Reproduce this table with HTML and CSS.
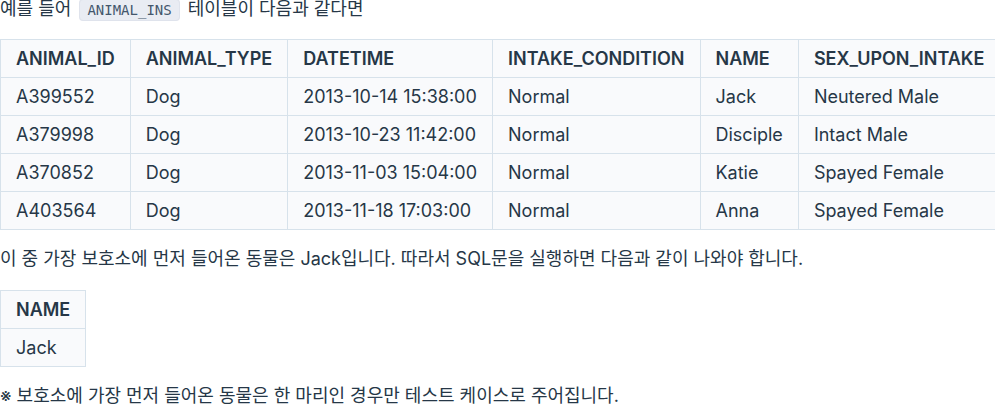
FILE: index.html
```html
<!DOCTYPE html>
<html lang="ko">
<head>
<meta charset="utf-8">
<link rel="stylesheet" href="styles.css">
</head>
<body>
<div class="doc">
  <p class="p1">예를 들어 <code class="chip">ANIMAL_INS</code> 테이블이 다음과 같다면</p>
  <table class="grid">
    <thead>
      <tr><th>ANIMAL_ID</th><th>ANIMAL_TYPE</th><th>DATETIME</th><th>INTAKE_CONDITION</th><th>NAME</th><th>SEX_UPON_INTAKE</th></tr>
    </thead>
    <tbody>
      <tr><td>A399552</td><td>Dog</td><td>2013-10-14 15:38:00</td><td>Normal</td><td>Jack</td><td>Neutered Male</td></tr>
      <tr><td>A379998</td><td>Dog</td><td>2013-10-23 11:42:00</td><td>Normal</td><td>Disciple</td><td>Intact Male</td></tr>
      <tr><td>A370852</td><td>Dog</td><td>2013-11-03 15:04:00</td><td>Normal</td><td>Katie</td><td>Spayed Female</td></tr>
      <tr><td>A403564</td><td>Dog</td><td>2013-11-18 17:03:00</td><td>Normal</td><td>Anna</td><td>Spayed Female</td></tr>
    </tbody>
  </table>
  <p class="p2">이 중 가장 보호소에 먼저 들어온 동물은 Jack입니다. 따라서 SQL문을 실행하면 다음과 같이 나와야 합니다.</p>
  <table class="grid">
    <thead><tr><th>NAME</th></tr></thead>
    <tbody><tr><td>Jack</td></tr></tbody>
  </table>
  <p class="p3">※ 보호소에 가장 먼저 들어온 동물은 한 마리인 경우만 테스트 케이스로 주어집니다.</p>
</div>
</body>
</html>
```
FILE: styles.css
```css
html, body {
  margin: 0;
  padding: 0;
  background: #ffffff;
}
.doc {
  font-family: Inter, "Noto Sans CJK KR", sans-serif;
  font-size: 18px;
  line-height: 27px;
  color: #263747;
}
.p1 {
  margin: 0 0 20px 0;
  line-height: 17px;
}
.p2 {
  margin: 15px 0 18px 0;
}
.p3 {
  margin: 15px 0 0 0;
}
.chip {
  font-family: "DejaVu Sans Mono", monospace;
  font-size: 14px;
  line-height: 18px;
  color: #44576c;
  background: #e9ecf3;
  border: 1px solid #dfe3ec;
  border-radius: 4px;
  padding: 2px 7px;
  margin: 0 3px;
}
.grid {
  border-collapse: collapse;
  background: #f9fafc;
}
.grid th, .grid td {
  border: 1px solid #d7e2eb;
  padding: 5px 15px;
  text-align: left;
  white-space: nowrap;
  font-weight: 400;
}
.grid th {
  font-weight: 600;
}
```
